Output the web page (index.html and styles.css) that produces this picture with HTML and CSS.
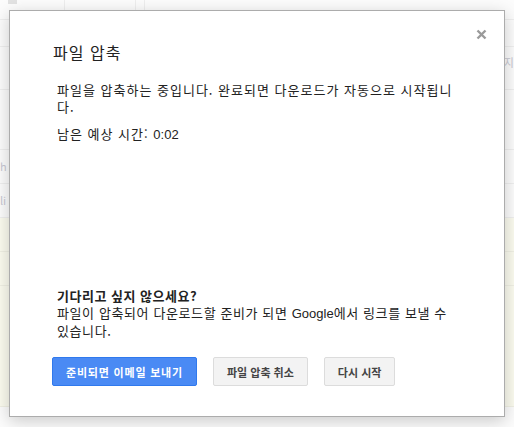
FILE: index.html
```html
<!DOCTYPE html>
<html lang="ko">
<head>
<meta charset="utf-8">
<link rel="stylesheet" href="styles.css">
</head>
<body>
<div class="page">
  <div class="toolbar">
    <div class="tb tb1"></div>
    <div class="tb tb2"></div>
    <div class="tb tb3"></div>
    <div class="tb tb4"></div>
  </div>
  <div class="rows">
    <div class="row r1"></div>
    <div class="row r2"></div>
    <div class="row r3"><span class="rt">우지</span></div>
    <div class="row r4"></div>
    <div class="row r5"><span class="lt">h</span></div>
    <div class="row r5"><span class="lt">li</span></div>
    <div class="row r5 yellow"></div>
    <div class="row r5 yellow"></div>
    <div class="row r6 yellow"></div>
  </div>
</div>

<div class="dialog">
  <div class="close">
    <svg width="11" height="11" viewBox="0 0 11 11"><path d="M1.5 1.5 L9.5 9.5 M9.5 1.5 L1.5 9.5" stroke="#9a9a9a" stroke-width="2.4" fill="none"/></svg>
  </div>
  <h1 class="title">파일 압축</h1>
  <div class="body">
    <p class="msg">파일을 압축하는 중입니다. 완료되면 다운로드가 자동으로 시작됩니다.</p>
    <p class="msg time">남은 예상 시간: <span class="lat">0:02</span></p>
  </div>
  <div class="footer">
    <p class="q">기다리고 싶지 않으세요?</p>
    <p class="msg note">파일이 압축되어 다운로드할 준비가 되면 <span class="lat">Google</span>에서 링크를 보낼 수 있습니다.</p>
    <div class="buttons">
      <button class="btn primary">준비되면 이메일 보내기</button>
      <button class="btn">파일 압축 취소</button>
      <button class="btn">다시 시작</button>
    </div>
  </div>
</div>
</body>
</html>
```

FILE: styles.css
```css
html, body {
  margin: 0;
  padding: 0;
  background: #fff;
  font-family: "Noto Sans CJK KR", "Noto Sans", sans-serif;
  width: 514px;
  height: 427px;
  overflow: hidden;
}

.page {
  width: 514px;
  height: 427px;
  background: #fcfcfc;
  position: relative;
}

.toolbar {
  display: flex;
  height: 10px;
}
.tb {
  height: 10px;
  border-right: 1px solid #eeeeee;
}
.tb1 { width: 9px; height: 4px; background: #e2e2e2; margin-left: 8px; margin-right: 32px; border: none; }
.tb2 { width: 15px; }
.tb3 { width: 70px; }
.tb4 { width: 8px; }

.rows {
  display: flex;
  flex-direction: column;
}
.row {
  border-bottom: 1px solid #efefef;
  position: relative;
  font-size: 11px;
  color: #c8c8d2;
}
.r1 { height: 9px; }
.r2 { height: 26px; }
.r3 { height: 42px; }
.r4 { height: 59px; }
.r5 { height: 33px; }
.r6 { height: 120px; }
.row.yellow { background: #fbfbef; border-bottom-color: #f0f0e4; }
.lt { position: absolute; left: 0; top: 8px; }
.rt { position: absolute; right: 0; top: 7px; }

.dialog {
  position: absolute;
  left: 9px;
  top: 10px;
  height: 405px;
  width: 408px;
  background: #fff;
  border: 1px solid #acacac;
  box-shadow: 0 4px 16px rgba(0,0,0,0.2);
  display: flex;
  flex-direction: column;
  padding: 0 43px;
  color: #222;
}

.close {
  position: absolute;
  right: 17px;
  top: 18px;
  width: 11px;
  height: 11px;
  display: flex;
}

.title {
  margin: 29px 0 0 0;
  font-size: 16px;
  font-weight: normal;
  line-height: 24px;
  letter-spacing: 1px;
}

.body {
  padding: 17px 4px 0 4px;
  flex: 1;
}

.msg {
  margin: 0;
  font-size: 13px;
  line-height: 17px;
  letter-spacing: 1px;
}
.msg.note { letter-spacing: 0.6px; }
.lat {
  font-family: "Liberation Sans", Arial, sans-serif;
  letter-spacing: 0;
}
.time { margin-top: 10px; }

.footer {
  padding: 0 4px;
}
.q {
  margin: 0;
  font-size: 13px;
  font-weight: bold;
  line-height: 17px;
  letter-spacing: 0.5px;
}
.buttons {
  display: flex;
  gap: 16px;
  margin: 18px 0 30px -5px;
}
.btn {
  height: 29px;
  padding: 0 13px;
  font-family: "Noto Sans CJK KR", sans-serif;
  font-size: 11px;
  font-weight: bold;
  border-radius: 2px;
  border: 1px solid #dcdcdc;
  background: #f3f3f3;
  color: #444;
}
.btn.primary {
  background: #4a8af4;
  border-color: #3079ed;
  color: #fff;
  letter-spacing: 0.8px;
}
```
